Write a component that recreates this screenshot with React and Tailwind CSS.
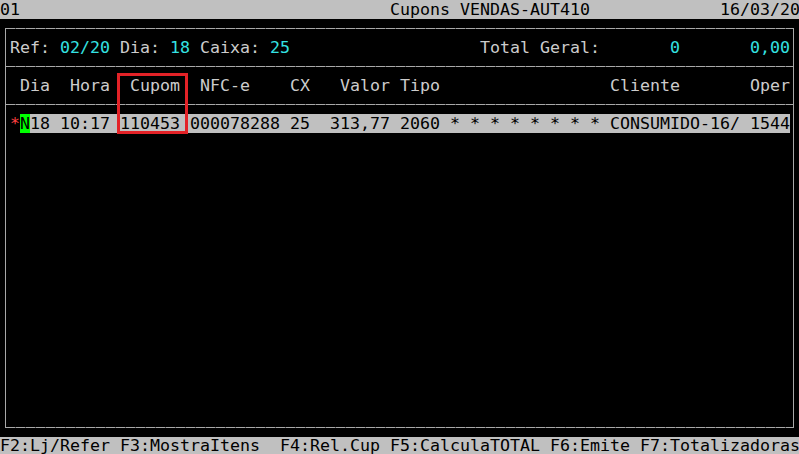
const CYAN = 'text-[#34e2e2]'

// place text segments on a fixed 10px character grid
function cells(segments, start = 0) {
  let col = start
  const out = []
  segments.forEach(([at, text, cls], i) => {
    if (at > col) out.push(<span key={'s' + i}>{' '.repeat(at - col)}</span>)
    out.push(
      <span key={i} className={cls}>
        {text}
      </span>
    )
    col = at + text.length
  })
  return out
}

function Rule() {
  return <div className="h-px bg-[repeating-linear-gradient(90deg,#a8a8a8_0_9px,#5a5a5a_9px_10px)]" />
}

function Row({ children, className = '' }) {
  return <div className={`h-[19px] leading-[19px] whitespace-pre ${className}`}>{children}</div>
}

export default function App() {
  return (
    <div
      className="relative w-[799px] h-[454px] overflow-hidden bg-black text-[#cccccc] text-[16.61px]"
      style={{ fontFamily: '"DejaVu Sans Mono", "Liberation Mono", monospace' }}
    >
      <Row className="bg-[#c0c0c0] text-black">
        {cells([
          [0, '01'],
          [39, 'Cupons VENDAS-AUT410'],
          [72, '16/03/20'],
        ])}
      </Row>

      <div className="h-[418px] px-[5px] py-[9px]">
        <div className="h-full flex flex-col border-x border-[#a8a8a8]">
          <Rule />
          <div className="flex-1 pl-[4px] pt-[9px]">
            <Row>
              {cells(
                [
                  [1, 'Ref: '],
                  [6, '02/20', CYAN],
                  [11, ' Dia: '],
                  [17, '18', CYAN],
                  [19, ' Caixa: '],
                  [27, '25', CYAN],
                  [48, 'Total Geral:'],
                  [67, '0', CYAN],
                  [75, '0,00', CYAN],
                ],
                1
              )}
            </Row>
            <div className="-ml-[4px] mt-[9px]">
              <Rule />
            </div>
            <Row className="mt-[9px]">
              {cells(
                [
                  [2, 'Dia'],
                  [7, 'Hora'],
                  [13, 'Cupom'],
                  [20, 'NFC-e'],
                  [29, 'CX'],
                  [34, 'Valor'],
                  [40, 'Tipo'],
                  [61, 'Cliente'],
                  [75, 'Oper'],
                ],
                1
              )}
            </Row>
            <div className="-ml-[4px] mt-[9px]">
              <Rule />
            </div>
            <Row className="mt-[9px] flex">
              <span className="text-[#ff4040]">*</span>
              <span className="bg-[#00ff00] text-black">N</span>
              <span className="bg-[#c0c0c0] text-black">
                {'18 10:17 110453 000078288 25  313,77 2060 * * * * * * * * CONSUMIDO-16/ 1544'}
              </span>
            </Row>
          </div>
          <Rule />
        </div>
      </div>

      <div className="h-[17px] leading-[17px] whitespace-pre bg-[#c0c0c0] text-black">
        {'F2:Lj/Refer F3:MostraItens  F4:Rel.Cup F5:CalculaTOTAL F6:Emite F7:Totalizadoras'}
      </div>

      <div className="absolute left-[117px] top-[73px] w-[71px] h-[61px] border-[3px] border-[#e32227]" />
    </div>
  )
}
